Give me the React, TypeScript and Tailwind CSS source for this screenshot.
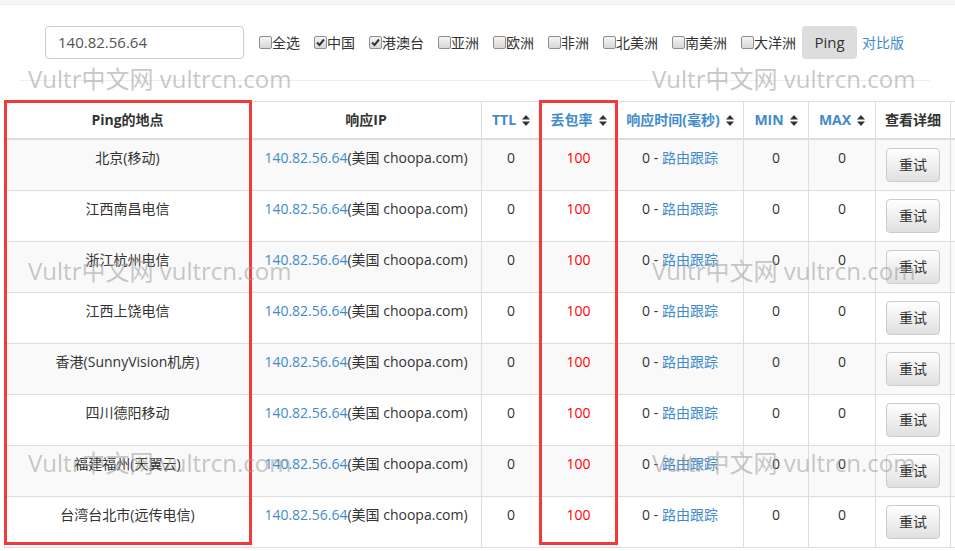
import React from 'react';

const ROWS = [
  '北京(移动)',
  '江西南昌电信',
  '浙江杭州电信',
  '江西上饶电信',
  '香港(SunnyVision机房)',
  '四川德阳移动',
  '福建福州(天翼云)',
  '台湾台北市(远传电信)',
];

const REGIONS = [
  { name: '全选', checked: false },
  { name: '中国', checked: true },
  { name: '港澳台', checked: true },
  { name: '亚洲', checked: false },
  { name: '欧洲', checked: false },
  { name: '非洲', checked: false },
  { name: '北美洲', checked: false },
  { name: '南美洲', checked: false },
  { name: '大洋洲', checked: false },
];

const WATERMARKS = [
  'left-[28px] top-[64px]',
  'left-[652px] top-[64px]',
  'left-[28px] top-[256px]',
  'left-[652px] top-[256px]',
  'left-[28px] top-[448px]',
  'left-[652px] top-[448px]',
];

function SortIcon() {
  return (
    <svg width="8" height="11" viewBox="0 0 8 11" className="inline-block ml-[6px] -mt-[2px]">
      <path d="M4 0 L8 4.5 H0 Z" fill="#333" />
      <path d="M0 6.5 H8 L4 11 Z" fill="#333" />
    </svg>
  );
}

function Check({ name, checked }: { name: string; checked: boolean }) {
  return (
    <label className="flex items-center mr-[14px] text-[14px] text-[#333]">
      <span className="w-[13px] h-[13px] border border-[#8f8f8f] rounded-[2px] bg-gradient-to-b from-[#f4f4f4] to-[#d8d8d8] flex items-center justify-center">
        {checked && (
          <svg width="9" height="9" viewBox="0 0 9 9">
            <path d="M1 4.5 L3.5 7 L8 1.5" stroke="#333" strokeWidth="2" fill="none" />
          </svg>
        )}
      </span>
      <span>{name}</span>
    </label>
  );
}

export default function App() {
  const th = 'border border-[#ddd] border-b-2 px-2 py-2 leading-[20px] font-bold text-center';
  const td = 'border border-[#ddd] px-2 py-2 leading-[20px] text-center align-top';
  return (
    <div
      className="relative w-[955px] h-[551px] overflow-hidden bg-white text-[14px] text-[#333]"
      style={{ fontFamily: '"Open Sans", "Noto Sans CJK SC", sans-serif' }}
    >
      <div className="h-[5px] bg-[#f5f5f5] border-b border-[#ececec]" />

      {/* Toolbar */}
      <div className="flex items-center mt-[21px] ml-[45px] h-[33px]">
        <div className="w-[199px] h-[33px] border border-[#ccc] rounded-[4px] px-[12px] flex items-center text-[15px] text-[#555] mr-[15px]">
          140.82.56.64
        </div>
        {REGIONS.map((r) => (
          <Check key={r.name} name={r.name} checked={r.checked} />
        ))}
        <button className="-ml-[8px] w-[55px] h-[33px] bg-[#ddd] rounded-[4px] text-[15px] text-[#333]">
          Ping
        </button>
        <a className="ml-[5px] text-[#428bca]">对比版</a>
      </div>

      <div className="mt-[21px] mx-[20px] w-[910px] border-t border-[#eee]" />

      {/* Table */}
      <table className="mt-[20px] ml-[4px] table-fixed border-collapse w-[1000px]">
        <colgroup>
          <col className="w-[246px]" />
          <col className="w-[231px]" />
          <col className="w-[59px]" />
          <col className="w-[76px]" />
          <col className="w-[127px]" />
          <col className="w-[65px]" />
          <col className="w-[67px]" />
          <col className="w-[75px]" />
          <col className="w-[54px]" />
        </colgroup>
        <thead>
          <tr>
            <th className={th}>Ping的地点</th>
            <th className={th}>响应IP</th>
            <th className={`${th} text-[#428bca]`}>TTL<SortIcon /></th>
            <th className={`${th} text-[#428bca]`}>丢包率<SortIcon /></th>
            <th className={`${th} text-[#428bca]`}>响应时间(毫秒)<SortIcon /></th>
            <th className={`${th} text-[#428bca]`}>MIN<SortIcon /></th>
            <th className={`${th} text-[#428bca]`}>MAX<SortIcon /></th>
            <th className={th}>查看详细</th>
            <th className={th}></th>
          </tr>
        </thead>
        <tbody>
          {ROWS.map((place, i) => (
            <tr key={place} className={i % 2 === 0 ? 'bg-[#f9f9f9]' : 'bg-white'}>
              <td className={td}>{place}</td>
              <td className={`${td} whitespace-nowrap`}>
                <span className="text-[#428bca]">140.82.56.64</span>(美国 choopa.com)
              </td>
              <td className={td}>0</td>
              <td className={`${td} text-[#f00]`}>100</td>
              <td className={td}>
                0 - <span className="text-[#428bca]">路由跟踪</span>
              </td>
              <td className={td}>0</td>
              <td className={td}>0</td>
              <td className={td}>
                <button className="block mx-auto w-[54px] h-[34px] border border-[#ccc] rounded-[4px] bg-gradient-to-b from-white to-[#e0e0e0] text-[#333]">
                  重试
                </button>
              </td>
              <td className={td}></td>
            </tr>
          ))}
        </tbody>
      </table>

      {/* Annotation boxes */}
      <div className="absolute left-[4px] top-[100px] w-[248px] h-[445px] border-[3px] border-[#f23a3a] pointer-events-none" />
      <div className="absolute left-[539px] top-[100px] w-[79px] h-[445px] border-[3px] border-[#f23a3a] pointer-events-none" />

      {/* Watermarks */}
      {WATERMARKS.map((pos) => (
        <div
          key={pos}
          className={`absolute ${pos} text-[24px] leading-[30px] text-[#999]/55 whitespace-nowrap pointer-events-none`}
        >
          Vultr中文网 vultrcn.com
        </div>
      ))}
    </div>
  );
}
